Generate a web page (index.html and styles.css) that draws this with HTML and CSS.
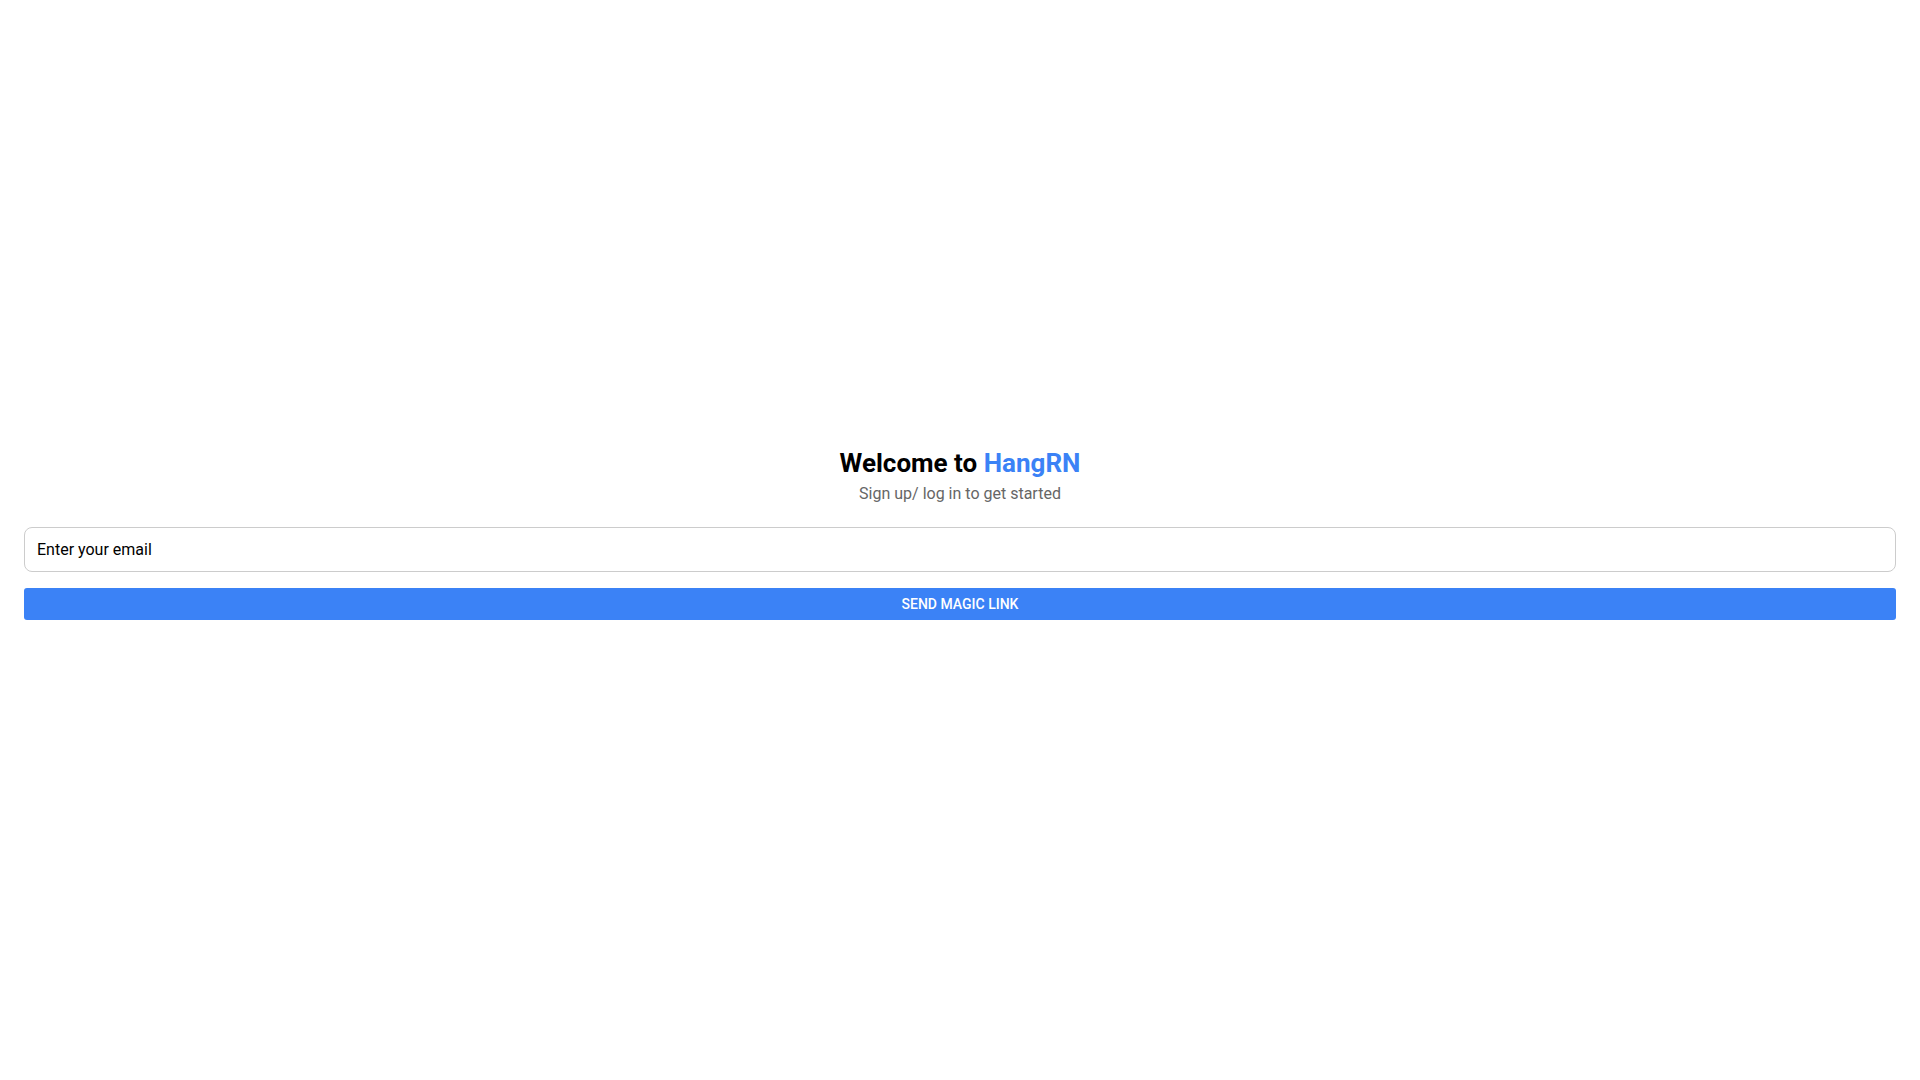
FILE: index.html
```html
<!DOCTYPE html>
<html lang="en">
<head>
<meta charset="utf-8">
<title>HangRN</title>
<link rel="stylesheet" href="styles.css">
</head>
<body>
<main class="page">
  <section class="auth">
    <h1 class="title">Welcome to <span class="brand">HangRN</span></h1>
    <p class="subtitle">Sign up/ log in to get started</p>
    <input class="email" type="email" placeholder="Enter your email">
    <button class="submit" type="button">SEND MAGIC LINK</button>
  </section>
</main>
</body>
</html>
```

FILE: styles.css
```css
html, body {
  margin: 0;
  padding: 0;
  background: #ffffff;
}
body {
  font-family: Roboto, "Liberation Sans", Arial, sans-serif;
}
.page {
  min-height: 100vh;
  display: flex;
  flex-direction: column;
  justify-content: center;
  padding: 0 24px;
  box-sizing: border-box;
}
.auth {
  display: flex;
  flex-direction: column;
  align-items: stretch;
  margin-bottom: 14px;
}
.title {
  margin: 0;
  font-size: 26px;
  line-height: 32px;
  font-weight: 700;
  color: #000000;
  text-align: center;
}
.brand {
  color: #3b82f6;
}
.subtitle {
  margin: 3px 0 0;
  font-size: 16px;
  line-height: 24px;
  color: #666666;
  text-align: center;
}
.email {
  margin-top: 21px;
  height: 45px;
  box-sizing: border-box;
  border: 1px solid #cccccc;
  border-radius: 8px;
  padding: 0 12px;
  font-family: Roboto, "Liberation Sans", Arial, sans-serif;
  font-size: 16px;
  color: #000000;
  outline: none;
  background: #ffffff;
}
.email::placeholder {
  color: #000000;
  opacity: 1;
}
.submit {
  margin-top: 16px;
  height: 32px;
  border: none;
  border-radius: 3px;
  background: #3b82f6;
  color: #ffffff;
  font-family: Roboto, "Liberation Sans", Arial, sans-serif;
  font-size: 14px;
  font-weight: 500;
  letter-spacing: 0;
  cursor: pointer;
}
```
